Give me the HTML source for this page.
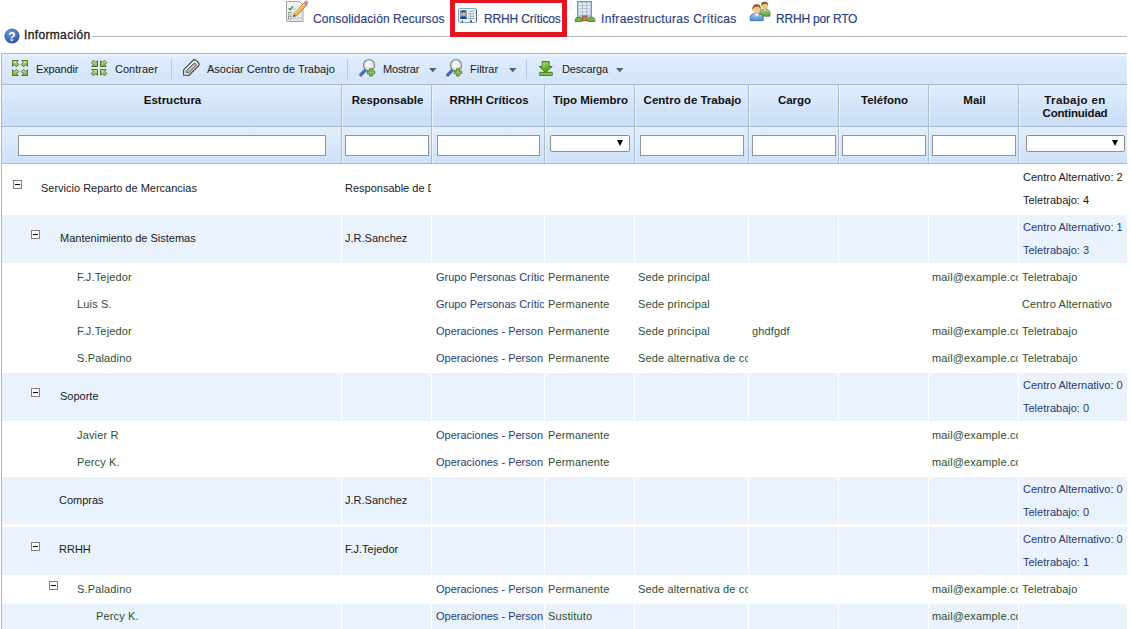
<!DOCTYPE html>
<html><head><meta charset="utf-8">
<style>
*{box-sizing:border-box}
html,body{margin:0;padding:0}
body{width:1131px;height:629px;overflow:hidden;background:#fff;position:relative;font-family:"Liberation Sans",sans-serif;color:#222}
.a{position:absolute}
.t{position:absolute;white-space:nowrap;line-height:14px}
.tab{font-size:12px;color:#283c7e;-webkit-text-stroke:0.15px #283c7e;top:12px!important}
.tb{font-size:11px;color:#1a1a1a}
.hd{font-size:11.5px;font-weight:bold;color:#111;text-align:center;line-height:12.5px;margin-top:0.5px}
.vs{position:absolute;top:0;width:1px;background:#aabfd8}
.inp{position:absolute;top:135px;height:21px;background:#fff;border:1px solid #939393}
.sel{position:absolute;top:135px;height:17px;background:#fff;border:1px solid #8e8e8e;border-radius:2px}
.sel:after{content:"";position:absolute;right:6px;top:4px;border-left:3.5px solid transparent;border-right:3.5px solid transparent;border-top:6px solid #000}
.row{position:absolute;left:1px;width:1126px}
.blue{background:#eaf2fd}
.cl{position:absolute;top:0;bottom:0;width:1px;background:#fff}
.c{position:absolute;font-size:11px;white-space:nowrap;overflow:hidden;line-height:14px}
.g{color:#2b5030;letter-spacing:0.15px}
.n{color:#283b74;letter-spacing:0px}
.k{color:#1a1a1a}
.mb{position:absolute;width:9px;height:9px;border:1px solid #808080;background:#fff}
.mb:after{content:"";position:absolute;left:1px;top:3px;width:5px;height:1px;background:#000}
</style></head><body>

<!-- top tabs -->
<div class="a" style="left:92px;top:36px;width:1035px;height:1px;background:#aebbc6"></div>

<svg class="a" style="left:286px;top:0px" width="22" height="23" viewBox="0 0 22 23">
 <defs><linearGradient id="pg" x1="0" y1="0" x2="1" y2="1"><stop offset="0" stop-color="#f4f5f6"/><stop offset="1" stop-color="#dcdfe2"/></linearGradient></defs>
 <path d="M0.5 1.5h13l3.5 3.5v16.5h-16.5z" fill="url(#pg)" stroke="#a4a8ac"/>
 <path d="M2.8 8.2l1.4 1.5 2.8-3.2" stroke="#3e9a2c" stroke-width="1.5" fill="none"/>
 <path d="M7.5 9h2" stroke="#9aa" stroke-width="0.8"/>
 <rect x="2.5" y="12.5" width="2.5" height="2.5" fill="#fff" stroke="#8a8f94" stroke-width="0.8"/>
 <rect x="2.5" y="16.5" width="2.5" height="2.5" fill="#fff" stroke="#8a8f94" stroke-width="0.8"/>
 <path d="M7 18h8" stroke="#9a9fa4" stroke-width="0.9" stroke-dasharray="1 1.3"/>
 <path d="M8.2 13.5 L18.2 2.8 L20.8 5 L10.6 15.7 L7.2 16.8 Z" fill="#f0b43c" stroke="#a8741e" stroke-width="0.8" stroke-linejoin="round"/>
 <path d="M9.2 13.2 L18.8 3.5" stroke="#fbe3a0" stroke-width="0.9"/>
 <path d="M18.2 2.8 L19.6 1.3 Q20.6 0.7 21.4 1.6 L22 2.6 L20.8 5 Z" fill="#c690cf" stroke="#9868a5" stroke-width="0.6"/>
 <path d="M7.2 16.8 L8.1 14.4 L9.6 15.9 Z" fill="#555"/>
</svg>
<div class="t tab" style="left:313px;top:11px;letter-spacing:0.1px">Consolidación Recursos</div>

<div class="a" style="left:450px;top:-2px;width:117px;height:39px;border:5px solid #e3141e"></div>
<svg class="a" style="left:458px;top:8px" width="19" height="15" viewBox="0 0 19 15">
 <rect x="0.5" y="0.5" width="18" height="14" rx="1.5" fill="#eef7fc" stroke="#8aa6c0"/>
 <path d="M18.5 1.5v12" stroke="#3f6a8e" stroke-width="1.2"/>
 <rect x="2" y="2" width="7" height="9" fill="#7aa3d6"/>
 <circle cx="5.4" cy="5.6" r="2.3" fill="#dcae7a"/>
 <path d="M3 5 Q3.2 2.2 5.6 2.4 Q8 2.4 7.8 5 Q6.5 3.6 5 4.2 Q4 4.6 3 5Z" fill="#4b3219"/>
 <path d="M2 11 Q2 8.2 5.5 8.2 Q9 8.2 9 11Z" fill="#1e4d8f"/>
 <path d="M10.5 3.3h6" stroke="#9cc6b8" stroke-width="1.2"/>
 <path d="M10.5 5.8h6M10.5 8.2h6M10.5 10.5h6" stroke="#5d6870" stroke-width="1" stroke-dasharray="1 0.5"/>
 <rect x="3.5" y="12.5" width="1.6" height="1.8" fill="#3a5f8a"/>
 <rect x="12" y="12.3" width="2" height="2" fill="#2d5a70"/>
</svg>
<div class="t tab" style="left:484px;top:11px;letter-spacing:-0.15px">RRHH Críticos</div>

<svg class="a" style="left:574px;top:0px" width="22" height="23" viewBox="0 0 22 23">
 <rect x="3.5" y="1.5" width="14" height="19" fill="#b4c3d6" stroke="#8593a6"/>
 <g fill="#e6f0fa">
 <rect x="4.8" y="2.8" width="3" height="2.2"/><rect x="9" y="2.8" width="3" height="2.2"/><rect x="13.2" y="2.8" width="3" height="2.2"/>
 <rect x="4.8" y="6" width="3" height="2.2"/><rect x="9" y="6" width="3" height="2.2"/><rect x="13.2" y="6" width="3" height="2.2"/>
 <rect x="4.8" y="9.2" width="3" height="2.2"/><rect x="9" y="9.2" width="3" height="2.2"/><rect x="13.2" y="9.2" width="3" height="2.2"/>
 <rect x="4.8" y="12.4" width="3" height="2.2"/><rect x="9" y="12.4" width="3" height="2.2"/><rect x="13.2" y="12.4" width="3" height="2.2"/>
 </g>
 <rect x="8.5" y="16" width="4.5" height="4.8" fill="#c08a3a" stroke="#6f5030" stroke-width="0.8"/>
 <path d="M1 21.5 Q1 17.2 4.5 17.2 Q8 17.2 8 21.5Z" fill="#79b443" stroke="#4e8628" stroke-width="0.9"/>
 <path d="M14 21.5 Q14 17.2 17.5 17.2 Q21 17.2 21 21.5Z" fill="#79b443" stroke="#4e8628" stroke-width="0.9"/>
</svg>
<div class="t tab" style="left:601px;top:11px;letter-spacing:0.33px">Infraestructuras Críticas</div>

<svg class="a" style="left:748px;top:0px" width="24" height="22" viewBox="0 0 24 22">
 <defs><linearGradient id="bb" x1="0" y1="0" x2="0" y2="1"><stop offset="0" stop-color="#9cc8f2"/><stop offset="1" stop-color="#4d8fd6"/></linearGradient>
 <linearGradient id="gb" x1="0" y1="0" x2="0" y2="1"><stop offset="0" stop-color="#a9d27a"/><stop offset="1" stop-color="#5f9a34"/></linearGradient></defs>
 <path d="M11.5 16.2 L11.5 13 Q11.5 9.3 16.8 9.3 Q22 9.3 22 13 L22 16.2Z" fill="url(#gb)" stroke="#55852f" stroke-width="0.8"/>
 <path d="M15 9.5 L16.7 11.3 L18.5 9.5Z" fill="#e4f0d6"/>
 <ellipse cx="16.6" cy="5.6" rx="3.3" ry="3.9" fill="#e7c190"/>
 <path d="M13.2 6 Q12.8 1.6 16.6 1.7 Q20.6 1.7 20.1 6 Q19.5 3.6 17 3.8 Q14.4 3.8 13.2 6Z" fill="#8a5527"/>
 <path d="M2.2 20.6 L2.2 17.2 Q2.2 13.6 8.7 13.6 Q15.2 13.6 15.2 17.2 L15.2 20.6Z" fill="url(#bb)" stroke="#3469ad" stroke-width="0.9"/>
 <path d="M6.2 13.8 L8.7 16.8 L11.2 13.8Z" fill="#f2f7fc"/>
 <ellipse cx="8.6" cy="9.3" rx="4" ry="4.7" fill="#ecc898"/>
 <path d="M4.5 10.5 Q3.6 4 8.6 4 Q13.6 4 12.8 10.5 Q12.3 6.8 8.9 6.8 Q5.3 6.8 4.5 10.5Z" fill="#9a6230"/>
</svg>
<div class="t tab" style="left:776px;top:11px;letter-spacing:-0.2px">RRHH por RTO</div>

<!-- Informacion legend -->
<svg class="a" style="left:4px;top:28px" width="16" height="16" viewBox="0 0 16 16">
 <defs><radialGradient id="qg" cx="0.4" cy="0.3" r="0.8"><stop offset="0" stop-color="#6c9be0"/><stop offset="1" stop-color="#1f4f9e"/></radialGradient></defs>
 <circle cx="8" cy="8" r="7.6" fill="url(#qg)"/>
 <text x="8" y="12.5" font-family="Liberation Sans" font-weight="bold" font-size="12" fill="#fff" text-anchor="middle">?</text>
</svg>
<div class="t" style="left:24px;top:28px;font-size:12px;color:#1a1a1a;letter-spacing:0.35px;-webkit-text-stroke:0.3px #1a1a1a">Información</div>

<!-- toolbar -->
<div class="a" style="left:1px;top:53px;width:1126px;height:32px;border:1px solid #a9bac9;border-bottom:none;border-right:none;background:linear-gradient(#e9f3fe 0,#e9f3fe 2px,#dfecfd 3px,#d2e3f9)"></div>
<svg class="a" style="left:12px;top:60px" width="17" height="17" viewBox="0 0 17 17">
 <defs><linearGradient id="gg" x1="0" y1="0" x2="0" y2="1"><stop offset="0" stop-color="#cfe89c"/><stop offset="1" stop-color="#7aaa3c"/></linearGradient></defs>
 <g fill="url(#gg)" stroke="#4a6820" stroke-width="0.9" stroke-linejoin="round"><polygon points="0.5,0.5 6.3,0.5 4.6,2.2 6.8,4.4 4.4,6.8 2.2,4.6 0.5,6.3"/><polygon points="15.5,0.5 9.7,0.5 11.4,2.2 9.2,4.4 11.6,6.8 13.8,4.6 15.5,6.3"/><polygon points="0.5,15.5 6.3,15.5 4.6,13.8 6.8,11.6 4.4,9.2 2.2,11.4 0.5,9.7"/><polygon points="15.5,15.5 9.7,15.5 11.4,13.8 9.2,11.6 11.6,9.2 13.8,11.4 15.5,9.7"/></g>
</svg>
<svg class="a" style="left:91px;top:60px" width="17" height="17" viewBox="0 0 17 17">
 <g fill="url(#gg)" stroke="#4a6820" stroke-width="0.9" stroke-linejoin="round"><polygon points="6.5,6.5 0.7,6.5 2.4,4.8 0.2,2.6 2.6,0.2 4.8,2.4 6.5,0.7"/><polygon points="9.5,6.5 15.3,6.5 13.6,4.8 15.8,2.6 13.4,0.2 11.2,2.4 9.5,0.7"/><polygon points="6.5,9.5 0.7,9.5 2.4,11.2 0.2,13.4 2.6,15.8 4.8,13.6 6.5,15.3"/><polygon points="9.5,9.5 15.3,9.5 13.6,11.2 15.8,13.4 13.4,15.8 11.2,13.6 9.5,15.3"/></g>
</svg>
<svg class="a" style="left:178px;top:56px" width="24" height="24" viewBox="0 0 24 24">
 <path d="M5.6 19.2 L5.6 13.9 L15.2 4.3 Q16.6 3.1 18 4.4 L20.6 7 Q21.8 8.4 20.5 9.7 L11 19.3 Z" fill="#f7f7f7" stroke="#4f4f4f" stroke-width="1.3" stroke-linejoin="round"/>
 <path d="M8.2 16.8 L8.2 14.8 L15.8 7.2 Q16.5 6.6 17.2 7.2 L18.1 8.1 Q18.7 8.8 18.1 9.5 L10.6 17 Z" fill="#a9a9a9" stroke="#5d5d5d" stroke-width="1" stroke-linejoin="round"/>
 <path d="M10 15.6 L16.6 9" stroke="#e8e8e8" stroke-width="0.8"/>
</svg>
<svg class="a" style="left:358px;top:59px" width="18" height="18" viewBox="0 0 18 18" id="magn">
 <path d="M2.8 15.8 L7.5 11" stroke="#2f5fb0" stroke-width="3.2" stroke-linecap="round"/>
 <path d="M2.8 15.8 L7.5 11" stroke="#8fb4ec" stroke-width="1" stroke-dasharray="1 1"/>
 <circle cx="11" cy="6.2" r="5.5" fill="#e4e6e8" stroke="#8a8d90" stroke-width="1.3"/>
 <circle cx="10.3" cy="5.3" r="3" fill="#f8f8f8"/>
 <path d="M11.6 9.7h2.8v2.3h2.3v2.8h-2.3v2.3h-2.8v-2.3h-2.3v-2.8h2.3z" fill="#8cc04c" stroke="#4c7a22" stroke-width="0.8"/>
</svg>
<svg class="a" style="left:445px;top:59px" width="18" height="18" viewBox="0 0 18 18">
 <path d="M2.8 15.8 L7.5 11" stroke="#2f5fb0" stroke-width="3.2" stroke-linecap="round"/>
 <path d="M2.8 15.8 L7.5 11" stroke="#8fb4ec" stroke-width="1" stroke-dasharray="1 1"/>
 <circle cx="11" cy="6.2" r="5.5" fill="#e4e6e8" stroke="#8a8d90" stroke-width="1.3"/>
 <circle cx="10.3" cy="5.3" r="3" fill="#f8f8f8"/>
 <path d="M11.6 9.7h2.8v2.3h2.3v2.8h-2.3v2.3h-2.8v-2.3h-2.3v-2.8h2.3z" fill="#8cc04c" stroke="#4c7a22" stroke-width="0.8"/>
</svg>
<svg class="a" style="left:539px;top:61px" width="15" height="15" viewBox="0 0 15 15">
 <defs><linearGradient id="dg" x1="0" y1="0" x2="0" y2="1"><stop offset="0" stop-color="#8fd04a"/><stop offset="1" stop-color="#4e9a1c"/></linearGradient></defs>
 <path d="M3.2 0.5h7v5h3l-6.5 6-6.5-6h3z" fill="url(#dg)" stroke="#3f6e1c" stroke-width="0.9" stroke-linejoin="round"/><path d="M5 1.6v4.5" stroke="#b8e88a" stroke-width="0.9"/>
 <rect x="0.5" y="11.3" width="13" height="3.3" rx="1" fill="#7cc13e" stroke="#3f6e1c" stroke-width="0.9"/>
</svg>
<svg class="a" style="left:429px;top:68px" width="8" height="5" viewBox="0 0 8 5"><polygon points="0,0 7.5,0 3.75,4.2" fill="#59616b"/></svg>
<svg class="a" style="left:509px;top:68px" width="8" height="5" viewBox="0 0 8 5"><polygon points="0,0 7.5,0 3.75,4.2" fill="#59616b"/></svg>
<svg class="a" style="left:616px;top:68px" width="8" height="5" viewBox="0 0 8 5"><polygon points="0,0 7.5,0 3.75,4.2" fill="#59616b"/></svg>
<div class="t tb" style="left:36px;top:62px;letter-spacing:-0.15px">Expandir</div>
<div class="t tb" style="left:115px;top:62px">Contraer</div>
<div class="a" style="left:171px;top:59px;width:1px;height:20px;background:#b8c9de"></div>
<div class="t tb" style="left:207px;top:62px">Asociar Centro de Trabajo</div>
<div class="a" style="left:347px;top:59px;width:1px;height:20px;background:#b8c9de"></div>
<div class="t tb" style="left:383px;top:62px;letter-spacing:-0.15px">Mostrar</div>
<div class="t tb" style="left:470px;top:62px">Filtrar</div>
<div class="a" style="left:526px;top:59px;width:1px;height:20px;background:#b8c9de"></div>
<div class="t tb" style="left:562px;top:62px;letter-spacing:-0.15px">Descarga</div>

<!-- header -->
<div class="a" style="left:1px;top:84px;width:1126px;height:42px;border-top:1px solid #a9bac9;border-left:1px solid #a9bed6;background:linear-gradient(#e1edfc,#c9ddf7)"></div>
<div class="a" style="left:1px;top:126px;width:1126px;height:38px;border-top:1px solid #a9bed6;border-bottom:1px solid #a9bed6;border-left:1px solid #a9bed6;background:linear-gradient(#e3eefc,#cee1f8)"></div>

<div class="t hd" style="left:3px;width:339px;top:93px">Estructura</div>
<div class="t hd" style="left:343px;width:89px;top:93px">Responsable</div>
<div class="t hd" style="left:433px;width:112px;top:93px">RRHH Críticos</div>
<div class="t hd" style="left:546px;width:89px;top:93px">Tipo Miembro</div>
<div class="t hd" style="left:636px;width:113px;top:93px">Centro de Trabajo</div>
<div class="t hd" style="left:750px;width:89px;top:93px">Cargo</div>
<div class="t hd" style="left:840px;width:89px;top:93px">Teléfono</div>
<div class="t hd" style="left:930px;width:89px;top:93px">Mail</div>
<div class="t hd" style="left:1021px;width:108px;top:93px;line-height:13px;margin-top:0.75px"><span style="letter-spacing:0.4px">Trabajo en</span><br><span style="letter-spacing:-0.2px">Continuidad</span></div>

<div class="inp" style="left:18px;width:308px"></div>
<div class="inp" style="left:345px;width:84px"></div>
<div class="inp" style="left:437px;width:103px"></div>
<div class="sel" style="left:550px;width:80px"></div>
<div class="inp" style="left:640px;width:104px"></div>
<div class="inp" style="left:752px;width:84px"></div>
<div class="inp" style="left:842px;width:84px"></div>
<div class="inp" style="left:932px;width:84px"></div>
<div class="sel" style="left:1026px;width:99px"></div>

<div class="a" style="left:341px;top:85px;width:1px;height:78px;background:#a9bed6"></div><div class="a" style="left:342px;top:85px;width:1px;height:78px;background:rgba(255,255,255,0.5)"></div><div class="a" style="left:431px;top:85px;width:1px;height:78px;background:#a9bed6"></div><div class="a" style="left:432px;top:85px;width:1px;height:78px;background:rgba(255,255,255,0.5)"></div><div class="a" style="left:544px;top:85px;width:1px;height:78px;background:#a9bed6"></div><div class="a" style="left:545px;top:85px;width:1px;height:78px;background:rgba(255,255,255,0.5)"></div><div class="a" style="left:634px;top:85px;width:1px;height:78px;background:#a9bed6"></div><div class="a" style="left:635px;top:85px;width:1px;height:78px;background:rgba(255,255,255,0.5)"></div><div class="a" style="left:748px;top:85px;width:1px;height:78px;background:#a9bed6"></div><div class="a" style="left:749px;top:85px;width:1px;height:78px;background:rgba(255,255,255,0.5)"></div><div class="a" style="left:838px;top:85px;width:1px;height:78px;background:#a9bed6"></div><div class="a" style="left:839px;top:85px;width:1px;height:78px;background:rgba(255,255,255,0.5)"></div><div class="a" style="left:928px;top:85px;width:1px;height:78px;background:#a9bed6"></div><div class="a" style="left:929px;top:85px;width:1px;height:78px;background:rgba(255,255,255,0.5)"></div><div class="a" style="left:1018px;top:85px;width:1px;height:78px;background:#a9bed6"></div><div class="a" style="left:1019px;top:85px;width:1px;height:78px;background:rgba(255,255,255,0.5)"></div>

<!--BODY-->
<div class="mb" style="left:13px;top:180px"></div>
<div class="c k" style="left:41px;top:181px">Servicio Reparto de Mercancias</div>
<div class="c k" style="left:345px;top:181px;width:86px">Responsable de Distribución</div>
<div class="c k" style="left:1023px;top:170px">Centro Alternativo: 2</div>
<div class="c k" style="left:1023px;top:193px">Teletrabajo: 4</div>
<div class="a blue" style="left:2px;top:215px;width:1125px;height:48px"></div>
<div class="a" style="left:341px;top:215px;width:1px;height:48px;background:#fff"></div>
<div class="a" style="left:431px;top:215px;width:1px;height:48px;background:#fff"></div>
<div class="a" style="left:544px;top:215px;width:1px;height:48px;background:#fff"></div>
<div class="a" style="left:634px;top:215px;width:1px;height:48px;background:#fff"></div>
<div class="a" style="left:748px;top:215px;width:1px;height:48px;background:#fff"></div>
<div class="a" style="left:838px;top:215px;width:1px;height:48px;background:#fff"></div>
<div class="a" style="left:928px;top:215px;width:1px;height:48px;background:#fff"></div>
<div class="a" style="left:1018px;top:215px;width:1px;height:48px;background:#fff"></div>
<div class="mb" style="left:31px;top:230px"></div>
<div class="c k" style="left:60px;top:231px">Mantenimiento de Sistemas</div>
<div class="c k" style="left:345px;top:231px">J.R.Sanchez</div>
<div class="c n" style="left:1023px;top:220px">Centro Alternativo: 1</div>
<div class="c n" style="left:1023px;top:243px">Teletrabajo: 3</div>
<div class="c g" style="left:77px;top:270px">F.J.Tejedor</div>
<div class="c n" style="left:436px;top:270px;width:108px">Grupo Personas Crític</div>
<div class="c g" style="left:548px;top:270px;width:86px">Permanente</div>
<div class="c g" style="left:638px;top:270px;width:110px">Sede principal</div>
<div class="c g" style="left:932px;top:270px;width:86px">mail@example.com</div>
<div class="c g" style="left:1022px;top:270px;width:105px">Teletrabajo</div>
<div class="c g" style="left:77px;top:297px">Luis S.</div>
<div class="c n" style="left:436px;top:297px;width:108px">Grupo Personas Crític</div>
<div class="c g" style="left:548px;top:297px;width:86px">Permanente</div>
<div class="c g" style="left:638px;top:297px;width:110px">Sede principal</div>
<div class="c g" style="left:1022px;top:297px;width:105px">Centro Alternativo</div>
<div class="c g" style="left:77px;top:324px">F.J.Tejedor</div>
<div class="c n" style="left:436px;top:324px;width:108px">Operaciones - Person</div>
<div class="c g" style="left:548px;top:324px;width:86px">Permanente</div>
<div class="c g" style="left:638px;top:324px;width:110px">Sede principal</div>
<div class="c g" style="left:752px;top:324px;width:86px">ghdfgdf</div>
<div class="c g" style="left:932px;top:324px;width:86px">mail@example.com</div>
<div class="c g" style="left:1022px;top:324px;width:105px">Teletrabajo</div>
<div class="c g" style="left:77px;top:351px">S.Paladino</div>
<div class="c n" style="left:436px;top:351px;width:108px">Operaciones - Person</div>
<div class="c g" style="left:548px;top:351px;width:86px">Permanente</div>
<div class="c g" style="left:638px;top:351px;width:110px">Sede alternativa de control</div>
<div class="c g" style="left:932px;top:351px;width:86px">mail@example.com</div>
<div class="c g" style="left:1022px;top:351px;width:105px">Teletrabajo</div>
<div class="a blue" style="left:2px;top:373px;width:1125px;height:48px"></div>
<div class="a" style="left:341px;top:373px;width:1px;height:48px;background:#fff"></div>
<div class="a" style="left:431px;top:373px;width:1px;height:48px;background:#fff"></div>
<div class="a" style="left:544px;top:373px;width:1px;height:48px;background:#fff"></div>
<div class="a" style="left:634px;top:373px;width:1px;height:48px;background:#fff"></div>
<div class="a" style="left:748px;top:373px;width:1px;height:48px;background:#fff"></div>
<div class="a" style="left:838px;top:373px;width:1px;height:48px;background:#fff"></div>
<div class="a" style="left:928px;top:373px;width:1px;height:48px;background:#fff"></div>
<div class="a" style="left:1018px;top:373px;width:1px;height:48px;background:#fff"></div>
<div class="mb" style="left:31px;top:388px"></div>
<div class="c k" style="left:60px;top:389px">Soporte</div>
<div class="c n" style="left:1023px;top:378px">Centro Alternativo: 0</div>
<div class="c n" style="left:1023px;top:401px">Teletrabajo: 0</div>
<div class="c g" style="left:77px;top:428px">Javier R</div>
<div class="c n" style="left:436px;top:428px;width:108px">Operaciones - Person</div>
<div class="c g" style="left:548px;top:428px;width:86px">Permanente</div>
<div class="c g" style="left:932px;top:428px;width:86px">mail@example.com</div>
<div class="c g" style="left:77px;top:455px">Percy K.</div>
<div class="c n" style="left:436px;top:455px;width:108px">Operaciones - Person</div>
<div class="c g" style="left:548px;top:455px;width:86px">Permanente</div>
<div class="c g" style="left:932px;top:455px;width:86px">mail@example.com</div>
<div class="a blue" style="left:2px;top:477px;width:1125px;height:47px"></div>
<div class="a" style="left:341px;top:477px;width:1px;height:47px;background:#fff"></div>
<div class="a" style="left:431px;top:477px;width:1px;height:47px;background:#fff"></div>
<div class="a" style="left:544px;top:477px;width:1px;height:47px;background:#fff"></div>
<div class="a" style="left:634px;top:477px;width:1px;height:47px;background:#fff"></div>
<div class="a" style="left:748px;top:477px;width:1px;height:47px;background:#fff"></div>
<div class="a" style="left:838px;top:477px;width:1px;height:47px;background:#fff"></div>
<div class="a" style="left:928px;top:477px;width:1px;height:47px;background:#fff"></div>
<div class="a" style="left:1018px;top:477px;width:1px;height:47px;background:#fff"></div>
<div class="c k" style="left:59px;top:493px">Compras</div>
<div class="c k" style="left:345px;top:493px">J.R.Sanchez</div>
<div class="c n" style="left:1023px;top:482px">Centro Alternativo: 0</div>
<div class="c n" style="left:1023px;top:505px">Teletrabajo: 0</div>
<div class="a blue" style="left:2px;top:527px;width:1125px;height:48px"></div>
<div class="a" style="left:341px;top:527px;width:1px;height:48px;background:#fff"></div>
<div class="a" style="left:431px;top:527px;width:1px;height:48px;background:#fff"></div>
<div class="a" style="left:544px;top:527px;width:1px;height:48px;background:#fff"></div>
<div class="a" style="left:634px;top:527px;width:1px;height:48px;background:#fff"></div>
<div class="a" style="left:748px;top:527px;width:1px;height:48px;background:#fff"></div>
<div class="a" style="left:838px;top:527px;width:1px;height:48px;background:#fff"></div>
<div class="a" style="left:928px;top:527px;width:1px;height:48px;background:#fff"></div>
<div class="a" style="left:1018px;top:527px;width:1px;height:48px;background:#fff"></div>
<div class="mb" style="left:31px;top:542px"></div>
<div class="c k" style="left:59px;top:542px">RRHH</div>
<div class="c k" style="left:345px;top:542px">F.J.Tejedor</div>
<div class="c n" style="left:1023px;top:532px">Centro Alternativo: 0</div>
<div class="c n" style="left:1023px;top:555px">Teletrabajo: 1</div>
<div class="mb" style="left:49px;top:581px"></div>
<div class="c g" style="left:77px;top:582px">S.Paladino</div>
<div class="c n" style="left:436px;top:582px;width:108px">Operaciones - Person</div>
<div class="c g" style="left:548px;top:582px;width:86px">Permanente</div>
<div class="c g" style="left:638px;top:582px;width:110px">Sede alternativa de control</div>
<div class="c g" style="left:932px;top:582px;width:86px">mail@example.com</div>
<div class="c g" style="left:1022px;top:582px;width:105px">Teletrabajo</div>
<div class="a blue" style="left:2px;top:604px;width:1125px;height:25px"></div>
<div class="a" style="left:341px;top:604px;width:1px;height:25px;background:#fff"></div>
<div class="a" style="left:431px;top:604px;width:1px;height:25px;background:#fff"></div>
<div class="a" style="left:544px;top:604px;width:1px;height:25px;background:#fff"></div>
<div class="a" style="left:634px;top:604px;width:1px;height:25px;background:#fff"></div>
<div class="a" style="left:748px;top:604px;width:1px;height:25px;background:#fff"></div>
<div class="a" style="left:838px;top:604px;width:1px;height:25px;background:#fff"></div>
<div class="a" style="left:928px;top:604px;width:1px;height:25px;background:#fff"></div>
<div class="a" style="left:1018px;top:604px;width:1px;height:25px;background:#fff"></div>
<div class="c g" style="left:96px;top:609px">Percy K.</div>
<div class="c n" style="left:436px;top:609px;width:108px">Operaciones - Person</div>
<div class="c g" style="left:548px;top:609px;width:86px">Sustituto</div>
<div class="c g" style="left:932px;top:609px;width:86px">mail@example.com</div>
<!--/BODY-->
<!-- body left border -->
<div class="a" style="left:1px;top:163px;width:1px;height:466px;background:#a9bed6"></div>

</body></html>
